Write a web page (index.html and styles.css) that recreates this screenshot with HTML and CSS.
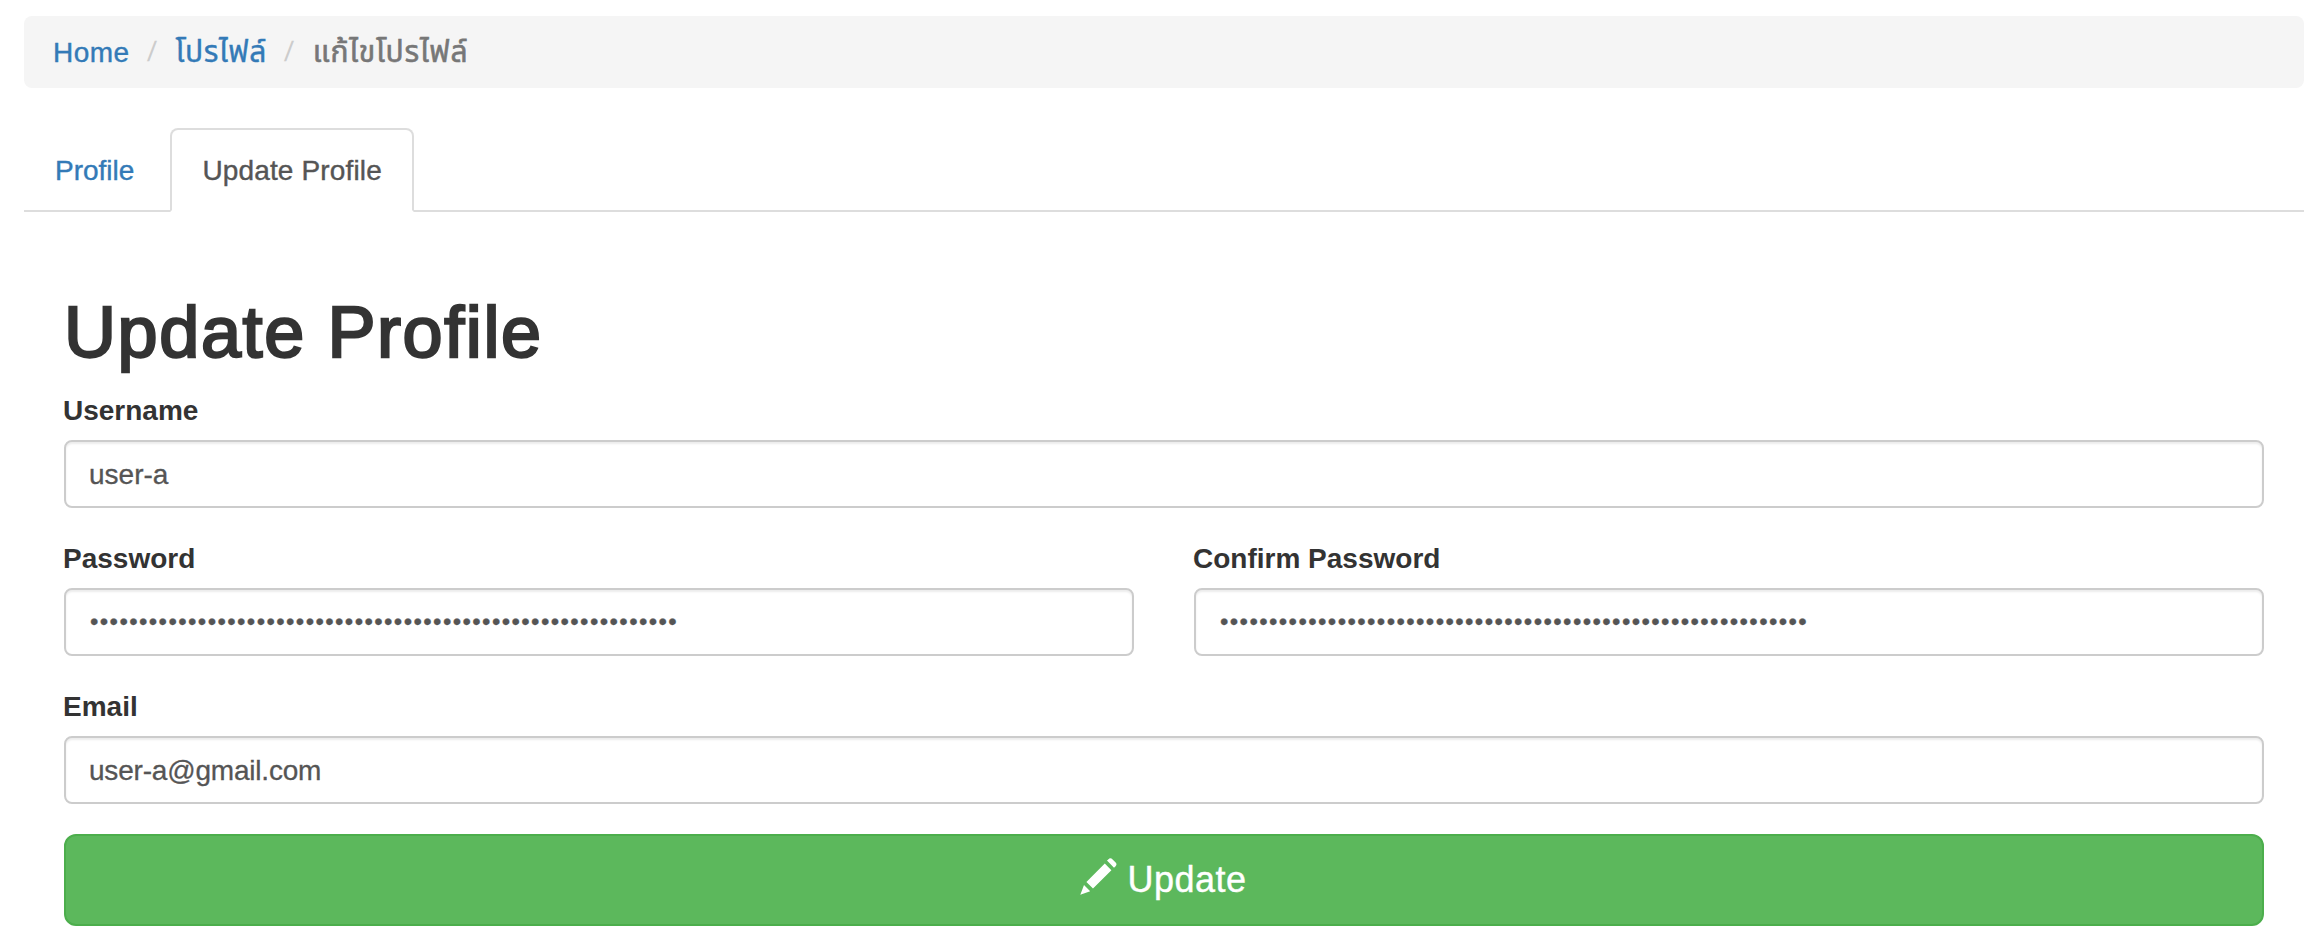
FILE: index.html
```html
<!DOCTYPE html>
<html lang="th">
<head>
<meta charset="utf-8">
<title>Update Profile</title>
<link rel="stylesheet" href="styles.css">
</head>
<body>
<ol class="breadcrumb">
  <li class="home"><a href="#">Home</a></li>
  <li><a class="thai" href="#">โปรไฟล์</a></li>
  <li class="active"><span class="thai">แก้ไขโปรไฟล์</span></li>
</ol>
<ul class="tabs">
  <li><a href="#">Profile</a></li>
  <li class="active"><a href="#">Update Profile</a></li>
</ul>
<form class="profile-form">
  <h1>Update Profile</h1>
  <div class="field">
    <label for="username">Username</label>
    <input id="username" type="text" value="user-a">
  </div>
  <div class="row">
    <div class="field">
      <label for="password">Password</label>
      <input id="password" type="password" value="012345678901234567890123456789012345678901234567890123456789">
    </div>
    <div class="field">
      <label for="confirm">Confirm Password</label>
      <input id="confirm" type="password" value="012345678901234567890123456789012345678901234567890123456789">
    </div>
  </div>
  <div class="field">
    <label for="email">Email</label>
    <input id="email" type="text" value="user-a@gmail.com">
  </div>
  <button class="submit" type="button">
    <svg class="pencil" viewBox="0 0 37 37" aria-hidden="true"><path d="M28.2 1.4Q30.4-.9 32.6 1.4L35.4 4.2Q37.6 6.2 35.4 8.4L34 9.8 27 2.6ZM24.8 5.6 31.4 12.2 13 30.6 6.4 24ZM4 27 10.2 33.2 0.3 36.7Z"/></svg>
    <span>Update</span>
  </button>
</form>
</body>
</html>
```
FILE: styles.css
```css
* { box-sizing: border-box; }
body {
  margin: 0;
  padding: 16px 14px 0 24px;
  background: #fff;
  color: #333;
  font: 28px/40px "Liberation Sans", "Noto Sans Thai", sans-serif;
}
a { color: #337ab7; text-decoration: none; }
.breadcrumb {
  display: flex;
  height: 72px;
  margin: 0 0 40px;
  padding: 16px 29px;
  list-style: none;
  background: #f5f5f5;
  border-radius: 8px;
}
.breadcrumb li { display: flex; }
.breadcrumb .home { padding-top: 1px; letter-spacing: .5px; }
.breadcrumb a, .tabs a { -webkit-text-stroke: .4px; }
.breadcrumb li + li::before {
  content: "/";
  margin: 0 20px 0 18px;
  color: #ccc;
  transform: skewX(-6deg);
}
.breadcrumb .active { color: #777; }
.thai {
  font-size: 30px;
  letter-spacing: .6px;
  white-space: nowrap;
  -webkit-text-stroke: .6px;
}
.breadcrumb .active .thai { letter-spacing: .75px; }
.tabs {
  display: flex;
  height: 84px;
  margin: 0;
  padding: 0;
  list-style: none;
  border-bottom: 2px solid #ddd;
}
.tabs li { margin-right: 4px; }
.tabs a {
  display: block;
  height: 84px;
  padding: 21px 30px 19px;
  border: 2px solid transparent;
  border-radius: 8px 8px 0 0;
}
.tabs li:first-child a { padding-left: 29px; }
.tabs .active a {
  color: #555;
  letter-spacing: .15px;
  background: #fff;
  border-color: #ddd #ddd transparent;
}
.profile-form { padding: 80px 40px 0; }
h1 {
  margin: 0 0 18px;
  font-size: 72px;
  font-weight: 400;
  line-height: 80px;
  letter-spacing: 1.6px;
  -webkit-text-stroke: 2.4px #333;
}
.row { display: grid; grid-template-columns: 1fr 1fr; gap: 60px; }
.field { margin-bottom: 30px; }
label { display: block; height: 40px; margin: 0 0 10px -1px; padding-top: 1px; font-weight: 700; }
input {
  display: block;
  width: 100%;
  height: 68px;
  padding: 13px 24px 11px 23px;
  font: 28px/40px "Liberation Sans", sans-serif;
  letter-spacing: -.2px;
  -webkit-text-stroke: .3px;
  color: #555;
  background: #fff;
  border: 2px solid #ccc;
  border-radius: 8px;
  box-shadow: inset 0 2px 2px rgba(0, 0, 0, .075);
}
#username { letter-spacing: 0; }
input[type="password"] { padding: 12px 24px; font-size: 24px; letter-spacing: 1.4px; }
.submit {
  display: flex;
  align-items: center;
  justify-content: center;
  gap: 10px;
  width: 100%;
  height: 92px;
  padding: 0 1px 0 0;
  font: 36px/48px "Liberation Sans", sans-serif;
  letter-spacing: .5px;
  -webkit-text-stroke: .4px;
  color: #fff;
  background: #5cb85c;
  border: 2px solid #4cae4c;
  border-radius: 12px;
}
.pencil { width: 37px; height: 37px; margin-bottom: 7px; fill: #fff; }
```
